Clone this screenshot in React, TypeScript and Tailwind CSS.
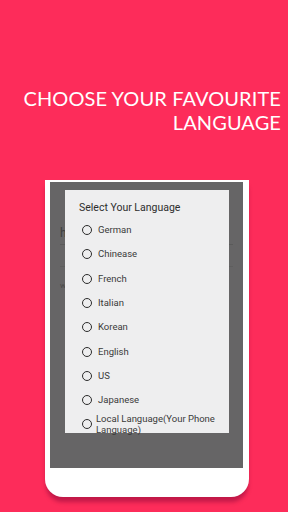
import React from "react";

const languages = ["German", "Chinease", "French", "Italian", "Korean", "English", "US", "Japanese"];

const Radio: React.FC = () => (
  <span className="block h-[10px] w-[10px] shrink-0 rounded-full border-[1.3px] border-[#2b2b2b]" />
);

export default function App() {
  return (
    <div className="flex h-[512px] w-[288px] flex-col overflow-hidden bg-[#fd2c5a] font-['Roboto',sans-serif]">
      <h1 className="pr-[7px] pt-[86px] text-right font-['Lato',sans-serif] text-[20px] leading-[24px] font-normal tracking-[0.1px] text-white">
        CHOOSE YOUR FAVOURITE
        <br />
        LANGUAGE
      </h1>

      <div className="ml-[45px] mt-[46px] h-[317px] w-[204px] rounded-b-[18px] bg-white px-[6px] pl-[5px] pt-[2px] shadow-[0_6px_4px_-1px_rgba(120,0,50,0.45)]">
        <div className="relative h-[286px] w-full bg-[#666566]">
          {/* dimmed screen content behind the dialog */}
          <div className="px-[10px] pt-[44px] text-[#3e3e3e]">
            <div className="border-b border-[#5a5a5a] pb-[4px] text-[12px] leading-[14px]">h</div>
            <div className="mt-[21px] border-b border-[#5e5e5e]" />
            <div className="mt-[14px] text-[8px] leading-[10px] text-[#4a4a4a]">ww</div>
          </div>

          <div className="absolute left-[15px] top-[8px] h-[243px] w-[164px] bg-[#eeeeef] px-[14px] pt-[11px] text-[#333]">
            <div className="h-[14px] text-[10.5px] leading-[14px] text-[#2d2d2d]">Select Your Language</div>
            <div className="mt-[3px] flex flex-col">
              {languages.map((l) => (
                <div key={l} className="flex h-[24.3px] items-center gap-[6px] pl-[3px] text-[9.5px] text-[#3a3a3a]">
                  <Radio />
                  <span>{l}</span>
                </div>
              ))}
              <div className="flex h-[24px] items-center gap-[4px] pl-[3px] text-[9.5px] leading-[11px] text-[#3a3a3a]">
                <Radio />
                <span>
                  Local Language(Your Phone
                  <br />
                  Language)
                </span>
              </div>
            </div>
          </div>
        </div>
      </div>
    </div>
  );
}
